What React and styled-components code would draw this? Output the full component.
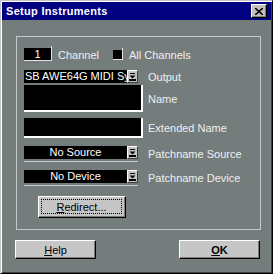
import styled, { createGlobalStyle } from "styled-components";

// Setup Instruments dialog (Win95 style)

const GlobalStyle = createGlobalStyle`
  html, body {
    margin: 0;
    padding: 0;
    background: #747c7c;
  }
  body {
    font-family: "Liberation Sans", Arial, sans-serif;
    font-size: 11px;
  }
`;

const Window = styled.div`
  width: 273px;
  height: 274px;
  box-sizing: border-box;
  display: flex;
  flex-direction: column;
  background: #747c7c;
  border: 1px solid;
  border-color: #c4c4c4 #000 #000 #c4c4c4;
  box-shadow: inset 1px 1px #fff, inset -1px -1px #3c4040;
  padding: 1px;
`;

const TitleBar = styled.div`
  height: 18px;
  flex: none;
  display: flex;
  align-items: center;
  justify-content: space-between;
  padding: 0 4px 0 4px;
  background: #000080;
  color: #fff;
  font-weight: bold;
  font-size: 11px;
  letter-spacing: 0.3px;
`;

const CloseButton = styled.div`
  width: 16px;
  height: 14px;
  box-sizing: border-box;
  display: flex;
  align-items: center;
  justify-content: center;
  background: #c0c0c0;
  border: 1px solid;
  border-color: #fff #000 #000 #fff;
  box-shadow: inset -1px -1px #808080;
`;

const Body = styled.div`
  flex: 1;
  display: flex;
  flex-direction: column;
  padding: 16px 10px 0 14px;
`;

const Group = styled.div`
  display: flex;
  flex-direction: column;
  border: 1px solid #c6caca;
  padding: 11px 0 11px 7px;
`;

const Row = styled.div`
  display: flex;
  align-items: center;
  height: ${(p) => p.$h}px;
  margin-top: ${(p) => p.$mt || 0}px;
`;

const FieldCol = styled.div`
  width: 124px;
  flex: none;
  display: flex;
  flex-direction: column;
`;

const Label = styled.span`
  color: #eef0f0;
  font-size: 11px;
  white-space: nowrap;
  margin-left: ${(p) => p.$ml || 0}px;
`;

const Spin = styled.div`
  position: relative;
  width: 27px;
  height: 12px;
  background: #000;
  color: #fff;
  border-right: 1px solid #e4e4e4;
  border-bottom: 1px solid #e4e4e4;
  text-align: center;
  line-height: 12px;
  font-size: 11px;

  &::after {
    content: "";
    position: absolute;
    right: -1px;
    top: -2px;
    width: 1px;
    height: 3px;
    background: #e4e4e4;
  }
`;

const Check = styled(Spin)`
  width: 9px;
  height: 9px;
  margin-left: 14px;
`;

const Select = styled.div`
  display: flex;
  width: 114px;
  height: 13px;
`;

const SelectValue = styled.div`
  flex: 1;
  min-width: 0;
  background: #000;
  color: #fff;
  overflow: hidden;
  white-space: nowrap;
  line-height: 13px;
  font-size: 11px;
  padding-left: ${(p) => (p.$center ? 0 : 1)}px;
  text-align: ${(p) => (p.$center ? "center" : "left")};
`;

const DropButton = styled.div`
  width: 11px;
  height: 13px;
  box-sizing: border-box;
  display: flex;
  align-items: center;
  justify-content: center;
  background: #c4c4c4;
  border: 1px solid;
  border-color: #fff #3c3c3c #3c3c3c #fff;
`;

const Underlined = styled.div`
  width: 114px;
  padding-bottom: 2px;
  border-bottom: 1px solid #c6caca;
`;

const TextField = styled.div`
  width: 117px;
  height: ${(p) => p.$h}px;
  background: #000;
  border-right: 2px solid #fff;
  border-bottom: 2px solid #fff;
`;

const Button = styled.button`
  box-sizing: border-box;
  width: ${(p) => p.$w}px;
  height: ${(p) => p.$h}px;
  margin: 0;
  margin-left: ${(p) => p.$ml || 0}px;
  padding: 0;
  display: flex;
  align-items: center;
  justify-content: center;
  background: #c6c6c6;
  border: 1px solid;
  border-color: #fff #000 #000 #fff;
  box-shadow: inset -1px -1px #7c7c7c;
  font-family: "Liberation Sans", Arial, sans-serif;
  font-size: 11px;
  font-weight: ${(p) => (p.$bold ? "bold" : "normal")};
  color: #000;
`;

const FocusRect = styled.span`
  align-self: stretch;
  flex: 1;
  margin: 2px 3px 3px 2px;
  border: 1px dotted #000;
  display: flex;
  align-items: center;
  justify-content: center;
`;

const ButtonRow = styled.div`
  display: flex;
  justify-content: space-between;
  margin: 10px 1px 0 -1px;
`;

function DropIcon() {
  return (
    <svg width="7" height="8" viewBox="0 0 7 8">
      <rect x="1" y="0" width="5" height="1" fill="#000" />
      <path d="M0.5 2.5 H6.5 L3.5 5.5 Z" fill="#000" />
      <rect x="0" y="6" width="7" height="2" fill="#000" />
    </svg>
  );
}

function Dropdown({ value, center }) {
  return (
    <Select>
      <SelectValue $center={center}>{value}</SelectValue>
      <DropButton>
        <DropIcon />
      </DropButton>
    </Select>
  );
}

export default function App() {
  return (
    <>
      <GlobalStyle />
      <Window>
        <TitleBar>
          <span>Setup Instruments</span>
          <CloseButton>
            <svg width="8" height="7" viewBox="0 0 8 7">
              <path d="M0 0 L8 7 M8 0 L0 7" stroke="#000" strokeWidth="1.6" />
            </svg>
          </CloseButton>
        </TitleBar>
        <Body>
          <Group>
            <Row $h={13}>
              <Spin>1</Spin>
              <Label $ml={6}>Channel</Label>
              <Check />
              <Label $ml={6}>All Channels</Label>
            </Row>
            <Row $h={13} $mt={9}>
              <FieldCol>
                <Dropdown value="SB AWE64G MIDI Synth" />
              </FieldCol>
              <Label>Output</Label>
            </Row>
            <Row $h={27} $mt={2}>
              <FieldCol>
                <TextField $h={25} />
              </FieldCol>
              <Label>Name</Label>
            </Row>
            <Row $h={20} $mt={6}>
              <FieldCol>
                <TextField $h={18} />
              </FieldCol>
              <Label>Extended Name</Label>
            </Row>
            <Row $h={16} $mt={8}>
              <FieldCol>
                <Underlined>
                  <Dropdown value="No Source" center />
                </Underlined>
              </FieldCol>
              <Label>Patchname Source</Label>
            </Row>
            <Row $h={16} $mt={8}>
              <FieldCol>
                <Underlined>
                  <Dropdown value="No Device" center />
                </Underlined>
              </FieldCol>
              <Label>Patchname Device</Label>
            </Row>
            <Row $h={22} $mt={10}>
              <Button $w={88} $h={22} $ml={14}>
                <FocusRect>
                  <span>
                    <u>R</u>edirect...
                  </span>
                </FocusRect>
              </Button>
            </Row>
          </Group>
          <ButtonRow>
            <Button $w={81} $h={19}>
              <span>
                <u>H</u>elp
              </span>
            </Button>
            <Button $w={81} $h={19} $bold>
              <span>
                <u>O</u>K
              </span>
            </Button>
          </ButtonRow>
        </Body>
      </Window>
    </>
  );
}
